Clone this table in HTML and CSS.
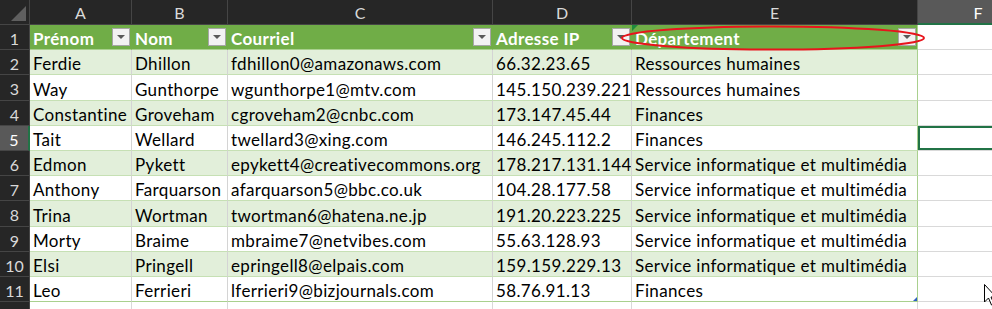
FILE: index.html
```html
<!DOCTYPE html>
<html lang="fr">
<head>
<meta charset="utf-8">
<title>Feuille</title>
<link rel="stylesheet" href="styles.css">
</head>
<body>
<div class="sheet">
  <div class="grid">
    <div class="ch corner"><span class="corner-tri"></span></div>
    <div class="ch">A</div>
    <div class="ch">B</div>
    <div class="ch">C</div>
    <div class="ch">D</div>
    <div class="ch">E</div>
    <div class="ch ch-sel">F</div>

    <div class="rh">1</div>
    <div class="c th"><span>Prénom</span><i class="fb"></i></div>
    <div class="c th"><span>Nom</span><i class="fb"></i></div>
    <div class="c th"><span>Courriel</span><i class="fb"></i></div>
    <div class="c th"><span>Adresse IP</span><i class="fb"></i></div>
    <div class="c th th-err th-last"><span>Département</span><i class="fb"></i></div>
    <div class="c out"></div>

    <div class="rh">2</div>
    <div class="c band">Ferdie</div><div class="c band">Dhillon</div><div class="c band">fdhillon0@amazonaws.com</div><div class="c band">66.32.23.65</div><div class="c band last">Ressources humaines</div><div class="c out"></div>

    <div class="rh">3</div>
    <div class="c">Way</div><div class="c">Gunthorpe</div><div class="c">wgunthorpe1@mtv.com</div><div class="c">145.150.239.221</div><div class="c last">Ressources humaines</div><div class="c out"></div>

    <div class="rh">4</div>
    <div class="c band">Constantine</div><div class="c band">Groveham</div><div class="c band">cgroveham2@cnbc.com</div><div class="c band">173.147.45.44</div><div class="c band last">Finances</div><div class="c out"></div>

    <div class="rh rh-sel">5</div>
    <div class="c">Tait</div><div class="c">Wellard</div><div class="c">twellard3@xing.com</div><div class="c">146.245.112.2</div><div class="c last">Finances</div><div class="c out active"></div>

    <div class="rh">6</div>
    <div class="c band">Edmon</div><div class="c band">Pykett</div><div class="c band">epykett4@creativecommons.org</div><div class="c band">178.217.131.144</div><div class="c band last">Service informatique et multimédia</div><div class="c out"></div>

    <div class="rh">7</div>
    <div class="c">Anthony</div><div class="c">Farquarson</div><div class="c">afarquarson5@bbc.co.uk</div><div class="c">104.28.177.58</div><div class="c last">Service informatique et multimédia</div><div class="c out"></div>

    <div class="rh">8</div>
    <div class="c band">Trina</div><div class="c band">Wortman</div><div class="c band">twortman6@hatena.ne.jp</div><div class="c band">191.20.223.225</div><div class="c band last">Service informatique et multimédia</div><div class="c out"></div>

    <div class="rh">9</div>
    <div class="c">Morty</div><div class="c">Braime</div><div class="c">mbraime7@netvibes.com</div><div class="c">55.63.128.93</div><div class="c last">Service informatique et multimédia</div><div class="c out"></div>

    <div class="rh">10</div>
    <div class="c band">Elsi</div><div class="c band">Pringell</div><div class="c band">epringell8@elpais.com</div><div class="c band">159.159.229.13</div><div class="c band last">Service informatique et multimédia</div><div class="c out"></div>

    <div class="rh">11</div>
    <div class="c bottom">Leo</div><div class="c bottom">Ferrieri</div><div class="c bottom">lferrieri9@bizjournals.com</div><div class="c bottom">58.76.91.13</div><div class="c bottom last corner-cell">Finances<i class="resize"></i></div><div class="c out"></div>

    <div class="rh"></div>
    <div class="c out"></div><div class="c out"></div><div class="c out"></div><div class="c out"></div><div class="c out"></div><div class="c out"></div>
  </div>

  <svg class="ellipse" width="310" height="28" viewBox="0 0 310 28">
    <ellipse cx="155" cy="14" rx="151" ry="11.5" fill="none" stroke="#e8141c" stroke-width="2"/>
  </svg>

  <svg class="cursor" width="14" height="24" viewBox="0 0 14 24">
    <path d="M1.5 1.5 L1.5 19 L5.5 15 L8.5 22 L11 21 L8 14 L13 14 Z" fill="#ffffff" stroke="#000000" stroke-width="1" stroke-linejoin="miter"/>
  </svg>
</div>
</body>
</html>
```

FILE: styles.css
```css
* { box-sizing: border-box; }
html, body {
  margin: 0;
  padding: 0;
  background: #ffffff;
  overflow: hidden;
}
.sheet {
  position: relative;
  width: 992px;
  height: 309px;
  overflow: hidden;
}
.grid {
  display: grid;
  grid-template-columns: 30px 102px 96px 265px 139px 286px 120px;
  grid-template-rows: 25px 25px 25px 26px 25px 25px 25px 25px 26px 25px 25px 25px 40px;
  font-family: "Lato", "Liberation Sans", sans-serif;
  font-size: 17px;
  letter-spacing: 0.35px;
  color: #000000;
}
.ch {
  background: #262626;
  color: #d9d9d9;
  border-right: 1px solid #454545;
  border-bottom: 1px solid #454545;
  display: flex;
  align-items: center;
  justify-content: center;
  font-size: 16px;
  letter-spacing: 0;
  padding-top: 1px;
}
.ch-sel {
  background: #595959;
  color: #ffffff;
  border-bottom: 2px solid #217346;
  border-right: none;
}
.corner {
  position: relative;
}
.corner-tri {
  position: absolute;
  right: 3px;
  bottom: 3px;
  width: 0;
  height: 0;
  border-left: 15px solid transparent;
  border-bottom: 15px solid #5f5f5f;
}
.rh {
  background: #262626;
  color: #d9d9d9;
  border-right: 1px solid #454545;
  border-bottom: 1px solid #454545;
  display: flex;
  align-items: center;
  justify-content: center;
  font-size: 16px;
  letter-spacing: 0;
  padding-top: 2px;
}
.rh-sel {
  background: #595959;
  color: #ffffff;
  border-right: 2px solid #217346;
}
.c {
  display: flex;
  align-items: center;
  padding: 3px 0 0 3px;
  white-space: nowrap;
  overflow: hidden;
  background: #ffffff;
  border-right: 1px solid #d4d4d4;
  border-bottom: 1px solid #c6e0b4;
}
.band {
  background: #e2efda;
}
.last {
  border-right: 1px solid #a9d08e;
}
.bottom {
  border-bottom: 1px solid #a9d08e;
}
.out {
  border-bottom: 1px solid #d9d9d9;
  border-right: 1px solid #d9d9d9;
}
.active {
  box-shadow: inset 0 0 0 2px #217346;
}
.th {
  background: #70ad47;
  color: #ffffff;
  font-weight: 700;
  border-right: 1px solid #70ad47;
  border-bottom: 1px solid #a9d08e;
  padding-top: 2px;
  padding-right: 1px;
  position: relative;
}
.th span {
  flex: 1;
}
.th-last {
  border-right: 1px solid #a9d08e;
}
.th-err::before {
  content: "";
  position: absolute;
  left: 0;
  top: 0;
  border-top: 6px solid #1e8a3c;
  border-right: 6px solid transparent;
}
.fb {
  width: 18px;
  height: 18px;
  margin-top: -3px;
  background: #f2f2f2;
  border: 1px solid #a6a6a6;
  position: relative;
  flex: none;
}
.fb::after {
  content: "";
  position: absolute;
  left: 4px;
  top: 6px;
  border-left: 4px solid transparent;
  border-right: 4px solid transparent;
  border-top: 4px solid #595959;
}
.corner-cell {
  position: relative;
}
.resize {
  position: absolute;
  right: 0;
  bottom: 0;
  border-left: 4px solid transparent;
  border-bottom: 4px solid #2f5fc4;
}
.ellipse {
  position: absolute;
  left: 618px;
  top: 24px;
}
.cursor {
  position: absolute;
  left: 983px;
  top: 283px;
}
```
